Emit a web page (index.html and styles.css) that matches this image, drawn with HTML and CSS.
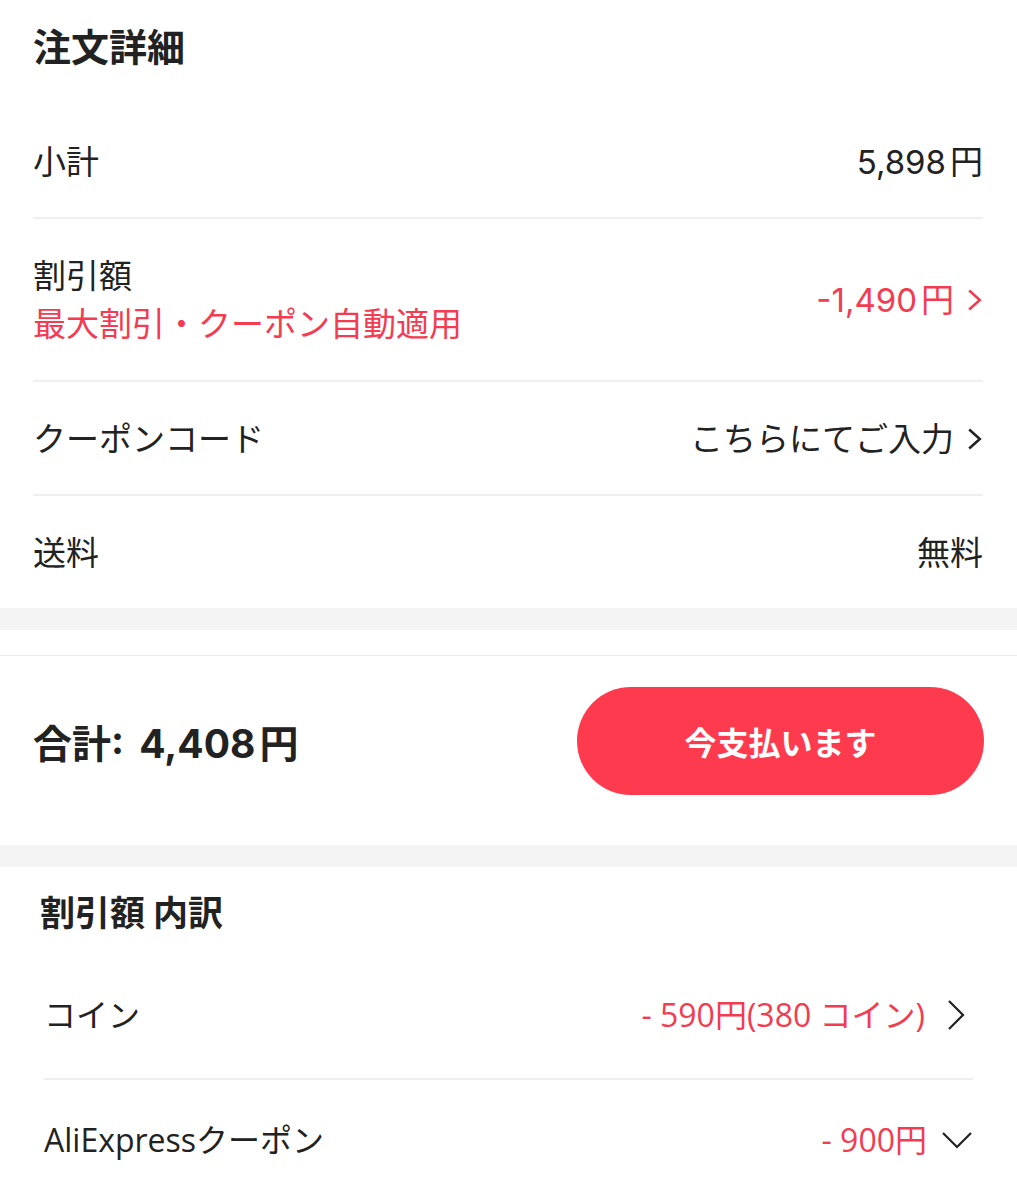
FILE: index.html
```html
<!DOCTYPE html>
<html lang="ja">
<head>
  <meta charset="UTF-8">
  <meta name="viewport" content="width=device-width, initial-scale=1.0">
  <title>注文詳細</title>
  <link rel="stylesheet" href="styles.css">
</head>
<body>
  <section class="detail">
    <h1 class="detail-title">注文詳細</h1>

    <div class="row">
      <span class="label">小計</span>
      <span class="value">5,898<span class="yen">円</span></span>
    </div>

    <div class="row row-double">
      <div class="label">
        <div>割引額</div>
        <div class="red">最大割引・クーポン自動適用</div>
      </div>
      <span class="value red">-1,490<span class="yen">円</span>
        <svg class="chev" viewBox="0 0 16 24"><path d="M3 3l10 9-10 9"/></svg>
      </span>
    </div>

    <div class="row">
      <span class="label">クーポンコード</span>
      <span class="value">こちらにてご入力
        <svg class="chev" viewBox="0 0 16 24"><path d="M3 3l10 9-10 9"/></svg>
      </span>
    </div>

    <div class="row">
      <span class="label">送料</span>
      <span class="value">無料</span>
    </div>
  </section>

  <div class="band"></div>

  <section class="total">
    <div class="total-sum">合計: 4,408<span class="yen">円</span></div>
    <button class="pay">今支払います</button>
  </section>

  <div class="band"></div>

  <section class="breakdown">
    <h2 class="breakdown-title">割引額 内訳</h2>

    <div class="brow">
      <span>コイン</span>
      <span class="bvalue"><span class="red">- 590円(380 コイン)</span>
        <svg class="bchev" viewBox="0 0 18 32"><path d="M2 2l14 14-14 14"/></svg>
      </span>
    </div>

    <div class="brow">
      <span>AliExpressクーポン</span>
      <span class="bvalue"><span class="red">- 900円</span>
        <svg class="bdown" viewBox="0 0 32 18"><path d="M2 2l14 14 14-14"/></svg>
      </span>
    </div>
  </section>
</body>
</html>
```

FILE: styles.css
```css
body {
  margin: 0;
  background: #fff;
  color: #222;
  font-family: Inter, "Noto Sans CJK JP", sans-serif;
}
.red {
  color: #f33c51;
}
.yen {
  margin-left: 4px;
}

/* order detail */
.detail {
  padding: 0 34px 0 33px;
}
.detail-title {
  margin: 0;
  padding: 24px 0 35px;
  font-size: 38px;
  line-height: 46px;
  font-weight: bold;
}
.row {
  display: flex;
  justify-content: space-between;
  align-items: center;
  padding: 35px 0 33px;
  font-size: 33px;
  line-height: 44px;
  border-bottom: 2px solid #efefef;
}
.row:last-child {
  border-bottom: none;
}
.row-double {
  padding: 33px 0 32px;
  line-height: 48px;
}
.value {
  display: flex;
  align-items: center;
}
.chev {
  width: 17px;
  height: 26px;
  margin-left: 12px;
  fill: none;
  stroke: currentColor;
  stroke-width: 2.4;
}

.band {
  height: 22px;
  background: #f4f4f4;
}

/* total */
.total {
  display: flex;
  justify-content: space-between;
  align-items: center;
  margin-top: 25px;
  padding: 31px 33px 50px;
  border-top: 1px solid #ececec;
}
.total-sum {
  font-size: 39px;
  font-weight: bold;
  word-spacing: 6px;
}
.pay {
  width: 407px;
  height: 108px;
  border: none;
  border-radius: 54px;
  background: #fe3a4f;
  color: #fff;
  font-family: "Noto Sans CJK JP", sans-serif;
  font-size: 32px;
  font-weight: bold;
}

/* discount breakdown */
.breakdown {
  padding: 0 44px;
  font-family: "Open Sans", "Noto Sans CJK JP", sans-serif;
}
.breakdown-title {
  margin: 0;
  padding: 21px 0 16px;
  font-family: "Noto Sans CJK JP", sans-serif;
  font-size: 35px;
  line-height: 46px;
  font-weight: bold;
  margin-left: -4px;
}
.brow {
  display: flex;
  justify-content: space-between;
  align-items: center;
  padding: 43px 0 41px;
  font-size: 32px;
  line-height: 44px;
  border-bottom: 2px solid #efefef;
}
.brow:last-child {
  padding-top: 38px;
  border-bottom: none;
}
.bvalue {
  display: flex;
  align-items: center;
}
.bchev {
  width: 18px;
  height: 32px;
  margin: 0 8px 0 22px;
  fill: none;
  stroke: #222;
  stroke-width: 2.2;
}
.bdown {
  width: 32px;
  height: 18px;
  margin-left: 14px;
  fill: none;
  stroke: #222;
  stroke-width: 2.2;
}
```
